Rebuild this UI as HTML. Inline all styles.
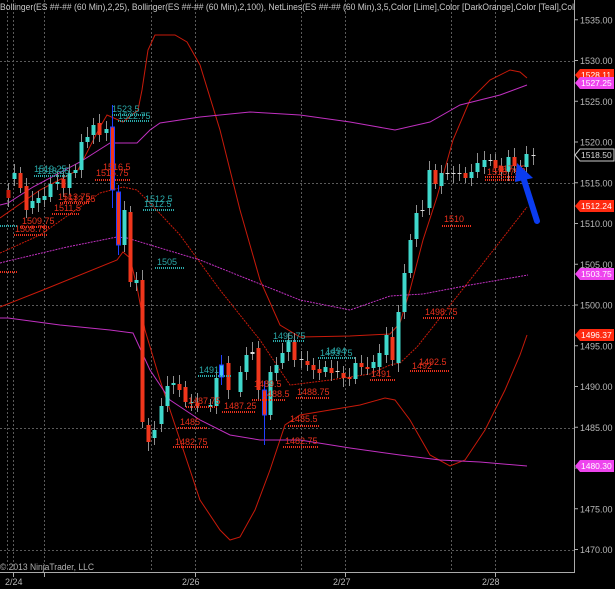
<!DOCTYPE html>
<html><head><meta charset="utf-8"><style>
html,body{margin:0;padding:0;background:#000;width:615px;height:589px;overflow:hidden}
svg{display:block}
text{font-family:"Liberation Sans",sans-serif}
</style></head><body>
<svg id="c" width="615" height="589" viewBox="0 0 615 589" xmlns="http://www.w3.org/2000/svg">
<rect width="615" height="589" fill="#000"/>
<g id="grid" stroke="#5a5a5a" stroke-width="1" stroke-dasharray="2,2">
<line x1="7.5" y1="0" x2="7.5" y2="572"/><line x1="13.5" y1="0" x2="13.5" y2="572"/>
<line x1="44.5" y1="0" x2="44.5" y2="572"/><line x1="151.5" y1="0" x2="151.5" y2="572"/>
<line x1="195.5" y1="0" x2="195.5" y2="572"/><line x1="301.5" y1="0" x2="301.5" y2="572"/>
<line x1="345.5" y1="0" x2="345.5" y2="572"/><line x1="451.5" y1="0" x2="451.5" y2="572"/>
<line x1="495.5" y1="0" x2="495.5" y2="572"/>
<line x1="0" y1="61.5" x2="574" y2="61.5"/><line x1="0" y1="183.5" x2="574" y2="183.5"/>
<line x1="0" y1="305.5" x2="574" y2="305.5"/><line x1="0" y1="428.5" x2="574" y2="428.5"/>
<line x1="0" y1="550.5" x2="574" y2="550.5"/>
</g>
<g id="lines" fill="none"></g>
<g id="candles"></g>
<g font-size="9" id="labels">
<g fill="#2aa8a8">
<text x="34" y="172">1519.25</text><text x="37" y="174">1518.25</text>
<text x="112" y="112">1523.5</text><text x="118" y="119">1522.75</text>
<text x="145" y="202">1512.5</text><text x="144" y="207">1512.5</text>
<text x="157" y="265">1505</text>
<text x="199" y="373">1491</text>
<text x="273" y="339">1495.75</text>
<text x="320" y="356">1493.75</text><text x="326" y="354">1494</text>
</g>
<g fill="#e8301c">
<text x="103" y="170">1516.5</text><text x="96" y="176">1515.75</text>
<text x="58" y="200">1513.75</text><text x="63" y="202">1513.25</text>
<text x="54" y="211">1511.5</text>
<text x="22" y="224">1509.75</text><text x="15" y="232">1508.75</text>
<text x="444" y="222">1510</text>
<text x="425" y="315">1498.75</text>
<text x="419" y="365">1492.5</text><text x="412" y="369">1492</text>
<text x="371" y="377">1491</text>
<text x="254" y="387">1489.5</text><text x="262" y="397">1488.5</text>
<text x="297" y="395">1488.75</text>
<text x="188" y="404">1487.75</text><text x="224" y="409">1487.25</text>
<text x="180" y="425">1485</text><text x="290" y="422">1485.5</text>
<text x="175" y="445">1482.75</text><text x="285" y="444">1482.75</text>
<text x="487" y="175">1516.75</text><text x="493" y="172">1517.25</text>
</g>
</g>
<g id="dots" stroke-width="2" stroke-dasharray="1,1"></g>
<path d="M537 221 L524 180" stroke="#0b3cf0" stroke-width="6" stroke-linecap="round"/>
<path d="M517 163 L533 178 L515 182 Z" fill="#0b3cf0"/>
<line x1="574.5" y1="0" x2="574.5" y2="573" stroke="#aaa"/>
<line x1="0" y1="572.5" x2="575" y2="572.5" stroke="#aaa"/>
<g stroke="#aaa" id="ticks"></g>
<g fill="#b8b8b8" font-size="9" id="axl"></g>
<g font-size="8.5">
<path d="M575 75 l5 -6 h34 v12 h-34z" fill="#ff2a10"/><text x="581" y="78" fill="#fff">1528.11</text>
<path d="M575 83 l5 -6 h34 v12 h-34z" fill="#ee44ee"/><text x="581" y="86" fill="#fff">1527.25</text>
<path d="M575 155 l5 -6 h34 v12 h-34z" fill="#000" stroke="#ccc"/><text x="581" y="158" fill="#ddd">1518.50</text>
<path d="M575 206 l5 -6 h34 v12 h-34z" fill="#ff2a10"/><text x="581" y="209" fill="#fff">1512.24</text>
<path d="M575 274 l5 -6 h34 v12 h-34z" fill="#ee44ee"/><text x="581" y="277" fill="#fff">1503.75</text>
<path d="M575 335 l5 -6 h34 v12 h-34z" fill="#ff2a10"/><text x="581" y="338" fill="#fff">1496.37</text>
<path d="M575 466 l5 -6 h34 v12 h-34z" fill="#ee44ee"/><text x="581" y="469" fill="#fff">1480.30</text>
</g>
<text x="0" y="10" font-size="9.5" fill="#c8c8c8" textLength="574" lengthAdjust="spacingAndGlyphs">Bollinger(ES ##-## (60 Min),2,25), Bollinger(ES ##-## (60 Min),2,100), NetLines(ES ##-## (60 Min),3,5,Color [Lime],Color [DarkOrange],Color [Teal],Col</text>
<text x="0" y="570" font-size="9" fill="#b0b0b0" textLength="94" lengthAdjust="spacingAndGlyphs">© 2013 NinjaTrader, LLC</text>
<g fill="#b8b8b8" font-size="9">
<text x="5" y="585">2/24</text><text x="182" y="585">2/26</text><text x="333" y="585">2/27</text><text x="482" y="585">2/28</text>
</g>
<g stroke="#aaa"><line x1="13.5" y1="572" x2="13.5" y2="577"/><line x1="44.5" y1="572" x2="44.5" y2="577"/><line x1="195.5" y1="572" x2="195.5" y2="577"/><line x1="345.5" y1="572" x2="345.5" y2="577"/><line x1="495.5" y1="572" x2="495.5" y2="577"/></g>
</svg>
<script>
var NS="http://www.w3.org/2000/svg";
function el(p,t,a){var e=document.createElementNS(NS,t);for(var k in a)e.setAttribute(k,a[k]);document.getElementById(p).appendChild(e);return e;}
function pl(pts,col,w,dash){el("lines","polyline",{points:pts.map(function(p){return p.join(",")}).join(" "),stroke:col,"stroke-width":w||1,"stroke-dasharray":dash||"none"});}
var R="#c81a0a",M="#c030c0";
pl([[0,218],[40,190],[78,170],[100,127],[107,115],[123,122],[138,110],[142,90],[148,50],[155,35],[175,35],[187,42],[200,65],[220,130],[240,210],[260,280],[280,325],[300,337],[350,336],[390,334],[400,323],[410,290],[423,240],[437,197],[453,140],[470,100],[490,80],[510,70],[520,72],[527,78]],R);
pl([[0,253],[7,250],[40,235],[100,193],[123,187],[137,190],[150,203],[180,235],[220,290],[260,340],[290,385],[330,380],[370,374],[390,365],[400,363],[417,347],[470,280],[527,207]],R,1,"2,1");
pl([[0,307],[43,290],[117,260],[123,252],[130,258],[137,287],[145,330],[160,380],[180,440],[200,500],[220,530],[230,540],[240,537],[255,510],[270,470],[285,425],[300,415],[330,410],[360,405],[385,398],[395,400],[410,420],[430,455],[450,466],[465,460],[485,430],[505,390],[520,355],[527,335]],R);
pl([[0,205],[8,203],[33,187],[80,162],[110,143],[137,143],[150,130],[160,123],[200,117],[250,112],[300,115],[350,122],[395,130],[430,122],[460,105],[500,95],[527,85]],M);
pl([[0,263],[8,261],[67,247],[117,237],[127,238],[200,260],[250,280],[300,300],[350,310],[390,296],[423,294],[470,285],[528,275]],M,1,"2,1");
pl([[0,318],[8,318],[60,325],[110,330],[133,333],[150,370],[170,400],[200,420],[230,435],[260,440],[300,440],[350,448],[400,455],[440,460],[480,462],[527,466]],M);
var C="#3fd8cc",Rd="#f0361c",W="#ddd";
var cs=[[8,190,198,R],[14,173,179,C],[20,173,188,Rd],[26,186,210,Rd],[32,201,208,C],[38,198,203,C],[44,196,200,C],[50,184,197,C],[57,182,184,C],[63,179,188,Rd],[69,173,188,C],[75,170,173,C],[81,142,170,C],[87,137,142,C],[93,125,135,C],[99,123,135,Rd],[106,129,133,C],[112,127,190,Rd,1],[118,192,245,Rd,1],[124,210,245,C],[130,212,282,Rd],[136,280,283,C],[142,280,422,Rd],[148,425,442,Rd],[154,430,438,C],[161,406,424,C],[167,386,406,C],[173,383,385,C],[179,384,390,Rd],[185,387,402,Rd],[191,402,403,C],[197,403,406,Rd],[210,405,407,C],[216,378,406,C],[221,365,377,"#40c8ff",1],[228,363,390,Rd],[240,372,392,C],[246,355,372,C],[252,352,354,W],[258,348,390,Rd],[264,390,415,Rd,1],[270,372,415,C],[276,365,373,C],[282,353,363,C],[288,340,352,C],[294,342,360,Rd],[301,359,360,W],[307,361,365,Rd],[313,365,370,Rd],[319,369,373,Rd],[325,367,372,C],[331,368,373,Rd],[337,371,372,W],[343,373,378,Rd],[349,377,379,Rd],[355,363,379,C],[361,363,367,Rd],[367,367,369,Rd],[373,362,368,C],[379,353,367,C],[386,335,355,C],[392,337,360,Rd],[398,312,363,C],[404,273,312,C],[410,240,273,C],[416,213,239,C],[422,210,211,W],[429,170,208,C],[435,170,184,Rd],[441,173,186,C],[447,173,174,W],[453,173,174,W],[459,173,174,W],[465,173,178,Rd],[471,172,178,C],[477,163,172,C],[484,160,167,C],[490,160,161,W],[495,160,168,Rd],[501,166,172,Rd],[508,157,172,C],[514,157,166,Rd],[520,166,167,Rd],[526,154,167,C],[533,155,156,W]];
cs.forEach(function(c){var x=c[0],t=c[1],b=c[2];var wt=t-6-((x*7)%5),wb=b+5+((x*3)%5);
if(x==112){wt=105;wb=208;} if(x==118){wt=185;wb=255;} if(x==264)wb=445; if(x==221)wt=355;
el("candles","line",{x1:x+.5,x2:x+.5,y1:wt,y2:wb,stroke:c[4]?"#2040ff":"#909090"});
el("candles","rect",{x:x-1.5,y:t,width:4,height:Math.max(1,b-t),fill:c[3],stroke:c[4]?"#2040ff":"none","stroke-width":c[4]?1:0});});
function dl(x1,x2,y,col){el("dots","line",{x1:x1,x2:x2,y1:y,y2:y,stroke:col});}
var T="#2aa8a8",RR="#e8301c";
dl(34,68,176,T);dl(112,148,115,T);dl(118,150,121,T);dl(143,175,210,T);dl(155,185,268,T);dl(198,232,376,T);dl(273,305,341,T);dl(318,355,358,T);dl(0,18,226,T);
dl(95,130,180,RR);dl(60,90,203,RR);dl(52,80,214,RR);dl(14,48,235,RR);dl(20,50,227,RR);dl(442,472,226,RR);dl(423,455,318,RR);dl(410,450,371,RR);dl(370,395,380,RR);dl(252,285,400,RR);dl(296,330,398,RR);dl(186,218,407,RR);dl(222,255,412,RR);dl(178,208,428,RR);dl(288,320,426,RR);dl(173,208,447,RR);dl(283,318,447,RR);dl(485,525,177,RR);dl(485,520,180,RR);dl(0,18,272,RR);
for(var p=1470;p<=1535;p+=5){var y=305+(1500-p)*8.15;el("ticks","line",{x1:574,x2:578,y1:y,y2:y});var t=el("axl","text",{x:580,y:y+3.5});t.textContent=p.toFixed(2);}
</script>
</body></html>
